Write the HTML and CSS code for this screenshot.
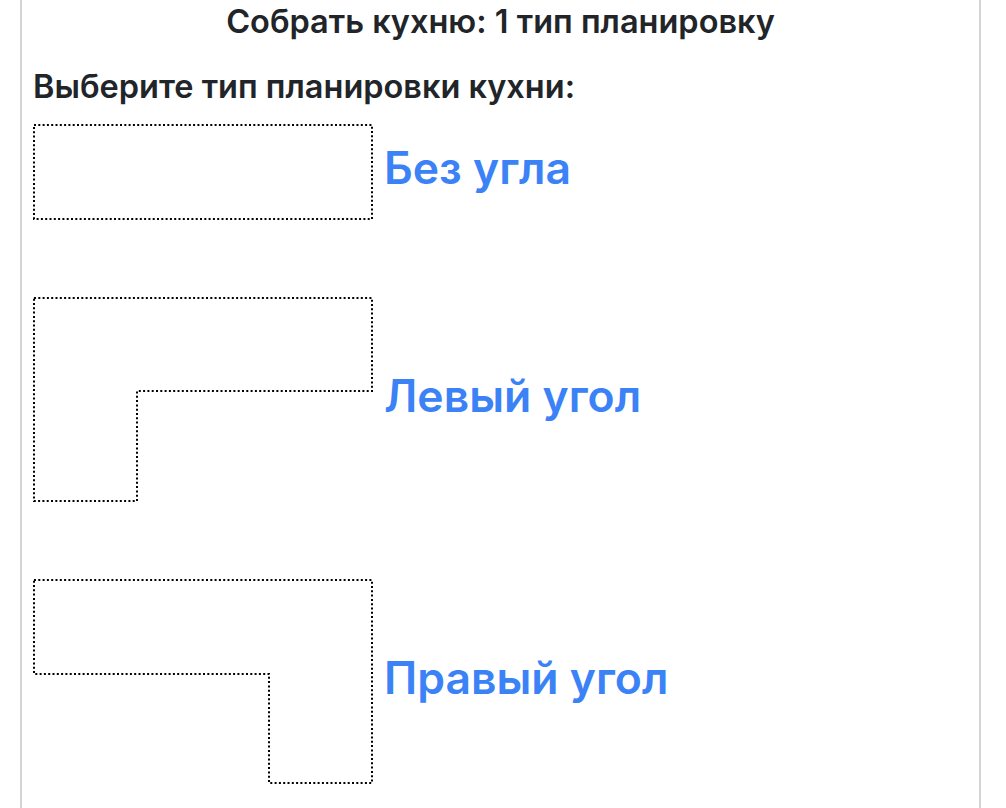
FILE: index.html
```html
<!DOCTYPE html>
<html lang="ru">
<head>
  <meta charset="UTF-8" />
  <meta name="viewport" content="width=device-width, initial-scale=1" />
  <title>Собрать кухню</title>
  <link rel="stylesheet" href="styles.css">
</head>
<body>
  <div class="page">
    <h1 class="title">Собрать кухню: 1 тип планировку</h1>
    <h2 class="subtitle">Выберите тип планировки кухни:</h2>

    <div class="layouts">
      <a class="layout" href="#">
        <svg class="shape" width="340" height="96" viewBox="0 0 340 96">
          <polygon points="1,1 339,1 339,95 1,95" />
        </svg>
        <span class="layout-name">Без угла</span>
      </a>

      <a class="layout" href="#">
        <svg class="shape" width="340" height="205" viewBox="0 0 340 205">
          <polygon points="1,1 339,1 339,94 104,94 104,204 1,204" />
        </svg>
        <span class="layout-name">Левый угол</span>
      </a>

      <a class="layout" href="#">
        <svg class="shape" width="340" height="205" viewBox="0 0 340 205">
          <polygon points="1,1 339,1 339,204 236,204 236,95 1,95" />
        </svg>
        <span class="layout-name">Правый угол</span>
      </a>
    </div>
  </div>
</body>
</html>
```

FILE: styles.css
```css
body {
  margin: 0;
  background: #fff;
  color: #212529;
  font-family: Inter, "Liberation Sans", Arial, sans-serif;
}

.page {
  box-sizing: border-box;
  width: 961px;
  min-height: 100vh;
  margin-left: 20px;
  padding: 4px 11px 0;
  border-left: 2px solid #d4d4d4;
  border-right: 2px solid #d4d4d4;
}

.title {
  margin: 0;
  font-size: 32.5px;
  line-height: 36px;
  font-weight: 600;
  text-align: center;
}

.subtitle {
  margin: 29px 0 0;
  font-size: 32.5px;
  line-height: 36px;
  font-weight: 600;
}

/* список вариантов планировки */
.layouts {
  display: flex;
  flex-direction: column;
  gap: 77px;
  margin-top: 19px;
}

.layout {
  display: flex;
  align-items: center;
  gap: 11px;
  text-decoration: none;
}

.shape {
  display: block;
  flex: none;
}

.shape polygon {
  fill: none;
  stroke: #000;
  stroke-width: 2;
  stroke-dasharray: 2 2.3;
}

.layout-name {
  padding-bottom: 8px;
  color: #3b82f6;
  font-size: 44.5px;
  font-weight: 600;
}
```
